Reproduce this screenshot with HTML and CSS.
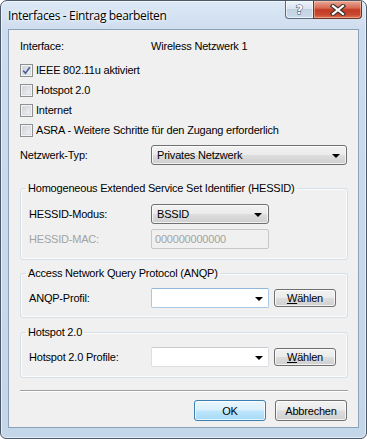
FILE: index.html
```html
<!DOCTYPE html>
<html lang="de">
<head>
<meta charset="utf-8">
<title>Interfaces - Eintrag bearbeiten</title>
<link rel="stylesheet" href="styles.css">
</head>
<body>
<div class="window">
  <div class="titlebar">
    <span class="title">Interfaces - Eintrag bearbeiten</span>
    <div class="caption-btns">
      <div class="cbtn help"><span class="q">?</span></div>
      <div class="cbtn close">
        <svg width="16" height="12" viewBox="0 0 16 12">
          <path d="M3 2 L13 10 M13 2 L3 10" stroke="#40332f" stroke-width="4.4" stroke-linecap="square" fill="none"/>
          <path d="M3 2 L13 10 M13 2 L3 10" stroke="#ffffff" stroke-width="2.2" stroke-linecap="square" fill="none"/>
        </svg>
      </div>
    </div>
  </div>
  <div class="client">
    <div class="row info">
      <span class="lbl wide-lbl">Interface:</span>
      <span class="value">Wireless Netzwerk 1</span>
    </div>
    <div class="checks">
      <div class="check"><span class="cbx checked"><svg width="9" height="9" viewBox="0 0 9 9"><path d="M1.2 4.6 L3.5 7.2 L7.8 1.2" stroke="#4b5f99" stroke-width="1.6" fill="none"/></svg></span><span>IEEE 802.11u aktiviert</span></div>
      <div class="check"><span class="cbx"></span><span>Hotspot 2.0</span></div>
      <div class="check"><span class="cbx"></span><span>Internet</span></div>
      <div class="check"><span class="cbx"></span><span>ASRA - Weitere Schritte für den Zugang erforderlich</span></div>
    </div>
    <div class="row net">
      <span class="lbl wide-lbl">Netzwerk-Typ:</span>
      <div class="dropdown full"><span>Privates Netzwerk</span><span class="arrow"></span></div>
    </div>

    <fieldset class="group g1">
      <legend>Homogeneous Extended Service Set Identifier (HESSID)</legend>
      <div class="row">
        <span class="lbl">HESSID-Modus:</span>
        <div class="dropdown short"><span>BSSID</span><span class="arrow"></span></div>
      </div>
      <div class="row mac">
        <span class="lbl disabled">HESSID-MAC:</span>
        <div class="textbox disabled-box">000000000000</div>
      </div>
    </fieldset>

    <fieldset class="group g2">
      <legend>Access Network Query Protocol (ANQP)</legend>
      <div class="row">
        <span class="lbl">ANQP-Profil:</span>
        <div class="combo focus"><span class="arrow"></span></div>
        <div class="btn small"><span><u>W</u>ählen</span></div>
      </div>
    </fieldset>

    <fieldset class="group g3">
      <legend>Hotspot 2.0</legend>
      <div class="row">
        <span class="lbl">Hotspot 2.0 Profile:</span>
        <div class="combo"><span class="arrow"></span></div>
        <div class="btn small"><span><u>W</u>ählen</span></div>
      </div>
    </fieldset>

    <div class="sep"></div>
    <div class="buttons">
      <div class="btn big default">OK</div>
      <div class="btn big">Abbrechen</div>
    </div>
  </div>
</div>
</body>
</html>
```
FILE: styles.css
```css
html, body {
  margin: 0;
  padding: 0;
  background: #ffffff;
}
body {
  font-family: "Liberation Sans", Arial, sans-serif;
  font-size: 11px;
  letter-spacing: -0.2px;
  color: #000;
}
.window {
  width: 367px;
  height: 439px;
  box-sizing: border-box;
  border: 1px solid #4d5a6a;
  border-radius: 7px 7px 6px 6px;
  background: linear-gradient(180deg, #dce8f5 0px, #cddcee 30px, #c4d6ea 100%);
  box-shadow: inset 0 0 0 1px rgba(255,255,255,0.55);
  display: flex;
  flex-direction: column;
  overflow: hidden;
}
.titlebar {
  height: 28px;
  display: flex;
  justify-content: space-between;
  align-items: flex-start;
  flex: none;
}
.title {
  font-family: "Open Sans", "Noto Sans", sans-serif;
  font-size: 12px;
  letter-spacing: -0.35px;
  line-height: 16px;
  margin: 7px 0 0 7px;
  color: #000;
  text-shadow: 0 0 6px #ffffff, 0 0 3px #ffffff;
}
.caption-btns {
  display: flex;
  margin-right: 4px;
}
.cbtn {
  height: 18px;
  box-sizing: border-box;
  border: 1px solid #5b6b80;
  border-top: none;
  display: flex;
  align-items: center;
  justify-content: center;
}
.help {
  width: 28px;
  border-radius: 0 0 0 4px;
  border-right: none;
  background: linear-gradient(180deg, #eef3f9 0%, #d9e4f0 45%, #c3d2e3 50%, #cbdaea 100%);
  box-shadow: inset 0 0 0 1px rgba(255,255,255,0.6);
}
.q {
  font-family: "DejaVu Sans", sans-serif;
  font-weight: bold;
  font-size: 13px;
  line-height: 14px;
  color: #fff;
  -webkit-text-stroke: 1px #3c4654;
  paint-order: stroke fill;
}
.close {
  width: 49px;
  border-radius: 0 0 4px 0;
  background: linear-gradient(180deg, #e8a898 0%, #d86c55 40%, #c23a24 52%, #c8482f 80%, #dd7352 100%);
  border-color: #6d3229;
  box-shadow: inset 0 0 0 1px rgba(255,220,200,0.45);
}
.client {
  flex: none;
  width: 351px;
  height: 399px;
  box-sizing: border-box;
  margin: 0 0 0 7px;
  border: 1px solid #8ea2b7;
  background: #f0f0f0;
  padding: 8px 10px 0 11px;
  display: flex;
  flex-direction: column;
}
.row {
  display: flex;
  align-items: center;
}
.lbl {
  width: 122px;
  flex: none;
}
.wide-lbl { width: 131px; }
.info { height: 16px; }
.checks {
  margin-top: 6px;
  display: flex;
  flex-direction: column;
}
.check {
  height: 20px;
  display: flex;
  align-items: center;
}
.cbx {
  width: 13px;
  height: 13px;
  box-sizing: border-box;
  border: 1px solid #8e8f8f;
  background: linear-gradient(135deg, #c6cbd2 0%, #e3e5e8 55%, #f7f7f7 100%);
  box-shadow: inset 0 0 0 1px #f4f4f4, inset 0 0 0 2px #d8dbe0;
  margin-right: 3px;
  display: flex;
  align-items: center;
  justify-content: center;
  flex: none;
}
.cbx svg { display: block; }
.net { margin-top: 5px; height: 20px; }
.dropdown {
  height: 20px;
  box-sizing: border-box;
  border: 1px solid #707070;
  border-radius: 3px;
  background: linear-gradient(180deg, #f2f2f2 0%, #ebebeb 48%, #dddddd 52%, #cfcfcf 100%);
  box-shadow: inset 0 0 0 1px rgba(255,255,255,0.7);
  display: flex;
  align-items: center;
  justify-content: space-between;
  padding: 0 6px 0 5px;
}
.full { width: 196px; }
.short { width: 118px; }
.arrow {
  width: 0;
  height: 0;
  border-left: 4px solid transparent;
  border-right: 4px solid transparent;
  border-top: 4px solid #000;
  margin-top: 1px;
}
.group {
  margin: 0;
  border: 1px solid #d5dfe5;
  border-radius: 3px;
  box-shadow: inset 0 0 0 1px rgba(255,255,255,0.7);
  padding: 8px 10px 9px 8px;
  min-width: 0;
}
.group legend {
  padding: 0 2px;
  margin-left: -3px;
  line-height: 14px;
  height: 14px;
}
.g1 { margin-top: 16px; padding-top: 9px; padding-bottom: 10px; }
.g2 { margin-top: 6px; }
.g3 { margin-top: 7px; padding-bottom: 10px; }
.g1 .row, .g2 .row, .g3 .row { height: 20px; }
.g1 .mac { margin-top: 5px; }
.disabled { color: #a3a3a3; }
.textbox {
  width: 118px;
  height: 20px;
  box-sizing: border-box;
  padding: 0 3px;
  line-height: 18px;
}
.disabled-box {
  border: 1px solid #c5c8cb;
  border-radius: 2px;
  background: #f0f0f0;
  color: #a3a3a3;
}
.combo {
  width: 118px;
  height: 20px;
  box-sizing: border-box;
  border: 1px solid #dcdfe3;
  border-top-color: #c9ccd0;
  border-radius: 2px;
  background: #fff;
  display: flex;
  align-items: center;
  justify-content: flex-end;
  padding-right: 5px;
}
.combo.focus {
  border-color: #a9c8e6;
  border-top-color: #8fb6dc;
}
.btn {
  box-sizing: border-box;
  border: 1px solid #707070;
  border-radius: 3px;
  background: linear-gradient(180deg, #f2f2f2 0%, #ebebeb 48%, #dddddd 52%, #cfcfcf 100%);
  box-shadow: inset 0 0 0 1px rgba(255,255,255,0.75);
  display: flex;
  align-items: center;
  justify-content: center;
}
.small {
  width: 62px;
  height: 18px;
  margin-left: 5px;
}
.big {
  width: 72px;
  height: 21px;
}
.default {
  border-color: #3c7fb1;
  background: linear-gradient(180deg, #eaf6fd 0%, #d9f0fc 48%, #bee6fd 52%, #a7d9f5 100%);
}
.sep {
  margin-top: 12px;
  height: 0;
  border-top: 1px solid #a0a0a0;
  border-bottom: 1px solid #ffffff;
}
.buttons {
  margin-top: 8px;
  display: flex;
  justify-content: flex-end;
  gap: 9px;
  padding-right: 1px;
}
```
